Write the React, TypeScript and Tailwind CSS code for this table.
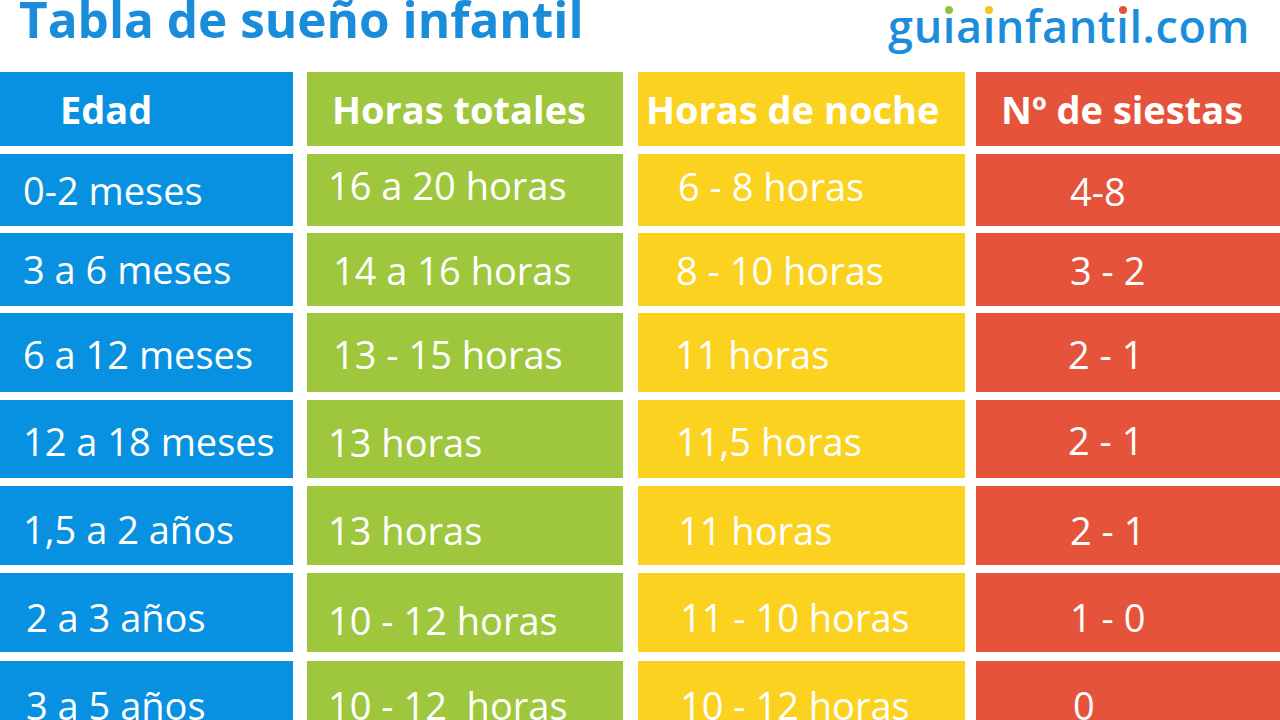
import React from "react";

interface Cell {
  text: string;
  cls?: string;
}

interface Row {
  cls: string;
  cells: Cell[];
}

const COLS = [
  "w-[293px] bg-[#0891e0]",
  "ml-[14px] w-[316px] bg-[#9fc73e]",
  "ml-[15px] w-[327px] bg-[#fbd220]",
  "ml-[11px] w-[304px] bg-[#e5533a]",
];

const HEADER: Cell[] = [
  { text: "Edad", cls: "pl-[60px]" },
  { text: "Horas totales", cls: "pl-[25px]" },
  { text: "Horas de noche", cls: "pl-[8px]" },
  { text: "Nº de siestas", cls: "pl-[25px]" },
];

const ROWS: Row[] = [
  {
    cls: "mt-[8px] h-[72px]",
    cells: [
      { text: "0-2 meses", cls: "pl-[23px]" },
      { text: "16 a 20 horas", cls: "pl-[21px] pb-[9px]" },
      { text: "6 - 8 horas", cls: "pl-[40px] pb-[8px]" },
      { text: "4-8", cls: "pl-[94px] pt-[2px]" },
    ],
  },
  {
    cls: "mt-[7px] h-[73px]",
    cells: [
      { text: "3 a 6 meses", cls: "pl-[23px]" },
      { text: "14 a 16 horas", cls: "pl-[26px] pt-[2px]" },
      { text: "8 - 10 horas", cls: "pl-[38px] pt-[2px]" },
      { text: "3 - 2", cls: "pl-[94px] pt-[2px]" },
    ],
  },
  {
    cls: "mt-[7px] h-[79px]",
    cells: [
      { text: "6 a 12 meses", cls: "pl-[23px] pt-[3px]" },
      { text: "13 - 15 horas", cls: "pl-[26px] pt-[3px]" },
      { text: "11 horas", cls: "pl-[37px] pt-[3px]" },
      { text: "2 - 1", cls: "pl-[92px] pt-[3px]" },
    ],
  },
  {
    cls: "mt-[8px] h-[78px]",
    cells: [
      { text: "12 a 18 meses", cls: "pl-[23px] pt-[4px]" },
      { text: "13 horas", cls: "pl-[21px] pt-[6px]" },
      { text: "11,5 horas", cls: "pl-[38px] pt-[4px]" },
      { text: "2 - 1", cls: "pl-[92px] pt-[2px]" },
    ],
  },
  {
    cls: "mt-[8px] h-[79px]",
    cells: [
      { text: "1,5 a 2 años", cls: "pl-[23px] pt-[7px]" },
      { text: "13 horas", cls: "pl-[21px] pt-[9px]" },
      { text: "11 horas", cls: "pl-[40px] pt-[9px]" },
      { text: "2 - 1", cls: "pl-[94px] pt-[9px]" },
    ],
  },
  {
    cls: "mt-[8px] h-[79px]",
    cells: [
      { text: "2 a 3 años", cls: "pl-[26px] pt-[9px]" },
      { text: "10 - 12 horas", cls: "pl-[21px] pt-[15px]" },
      { text: "11 - 10 horas", cls: "pl-[42px] pt-[9px]" },
      { text: "1 - 0", cls: "pl-[94px] pt-[9px]" },
    ],
  },
  {
    cls: "mt-[9px] h-[79px]",
    cells: [
      { text: "3 a 5 años", cls: "pl-[26px] pt-[9px]" },
      { text: "10 - 12  horas", cls: "pl-[21px] pt-[9px]" },
      { text: "10 - 12 horas", cls: "pl-[42px] pt-[9px]" },
      { text: "0", cls: "pl-[97px] pt-[9px]" },
    ],
  },
];

// dotless i with a coloured dot, as in the site logo
function DotI({ dot }: { dot: string }) {
  return (
    <span className="relative inline-block">
      ı
      <span
        className={`absolute left-1/2 top-[3px] h-[8px] w-[8px] -translate-x-1/2 rounded-full ${dot}`}
      />
    </span>
  );
}

function Logo() {
  return (
    <div className="mt-[3px] mr-[30px] text-[45px] font-semibold leading-none tracking-[0.6px] text-[#1b8ddb]">
      gu
      <DotI dot="bg-[#8dc63f]" />a
      <DotI dot="bg-[#f5c518]" />
      nfant
      <DotI dot="bg-[#e3523a]" />
      l.com
    </div>
  );
}

export default function App() {
  return (
    <div className="h-[720px] w-[1280px] overflow-hidden bg-white font-['Open_Sans',sans-serif]">
      <div className="flex h-[72px] items-start justify-between">
        <h1 className="pl-[19px] text-[49.5px] font-bold leading-[38px] text-[#1a8dda]">
          Tabla de sueño infantil
        </h1>
        <Logo />
      </div>

      <div className="flex h-[74px]">
        {HEADER.map((c, i) => (
          <div
            key={i}
            className={`flex items-center whitespace-pre text-[38px] font-bold text-white ${COLS[i]} ${c.cls ?? ""}`}
          >
            {c.text}
          </div>
        ))}
      </div>

      {ROWS.map((row, r) => (
        <div key={r} className={`flex ${row.cls}`}>
          {row.cells.map((c, i) => (
            <div
              key={i}
              className={`flex items-center whitespace-pre text-[38px] font-normal text-white ${COLS[i]} ${c.cls ?? ""}`}
            >
              {c.text}
            </div>
          ))}
        </div>
      ))}
    </div>
  );
}
